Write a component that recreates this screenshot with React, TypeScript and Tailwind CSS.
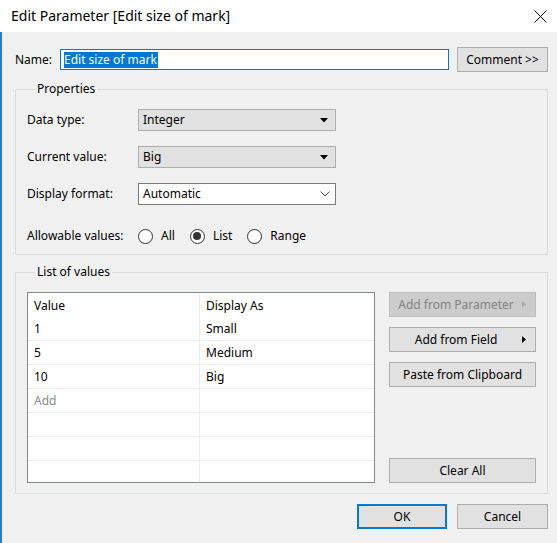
const FONT = "font-['Noto_Sans','Liberation_Sans',sans-serif]";

function DropArrow() {
  return (
    <svg width="8" height="5" viewBox="0 0 8 5" className="shrink-0">
      <path d="M0 0H8L4 4.5Z" fill="#000" />
    </svg>
  );
}

function Chevron() {
  return (
    <svg width="10" height="6" viewBox="0 0 10 6" className="shrink-0">
      <path d="M0.5 0.5L5 5L9.5 0.5" fill="none" stroke="#555" strokeWidth="1" />
    </svg>
  );
}

function Radio({ label, checked }: { label: string; checked?: boolean }) {
  return (
    <div className="flex items-center gap-[8px]">
      <span className="flex h-[15px] w-[15px] items-center justify-center rounded-full border border-[#333] bg-white">
        {checked && <span className="h-[8px] w-[8px] rounded-full bg-[#333]" />}
      </span>
      <span>{label}</span>
    </div>
  );
}

function SideButton({ label, arrow, disabled }: { label: string; arrow?: boolean; disabled?: boolean }) {
  return (
    <div
      className={`flex h-[25px] w-[147px] items-center border ${
        disabled ? "border-[#bfbfbf] bg-[#cccccc] text-[#838383]" : "border-[#adadad] bg-[#e1e1e1] text-black"
      }`}>
      <span className="flex-1 text-center">{label}</span>
      {arrow && (
        <span className="flex w-[13px] items-center">
          <svg width="4" height="7" viewBox="0 0 4 7">
            <path d="M0 0L4 3.5L0 7Z" fill={disabled ? "#ababab" : "#000"} />
          </svg>
        </span>
      )}
    </div>
  );
}

const ROWS = [
  { v: "1", d: "Small" },
  { v: "5", d: "Medium" },
  { v: "10", d: "Big" },
  { v: "Add", d: "", muted: true },
  { v: "", d: "" },
  { v: "", d: "" },
  { v: "", d: "" },
];

export default function App() {
  return (
    <div className={`flex h-[543px] w-[557px] flex-col bg-[#f0f0f0] text-[12px] leading-[16px] text-black ${FONT}`}>
      {/* Title bar */}
      <div className="flex h-[32px] shrink-0 items-center justify-between bg-white pl-[11px] pr-[10px]">
        <span className="text-[14px] leading-[20px]">Edit Parameter [Edit size of mark]</span>
        <svg width="13" height="13" viewBox="0 0 13 13">
          <path d="M0.5 0.5L12.5 12.5M12.5 0.5L0.5 12.5" stroke="#000" strokeWidth="1" />
        </svg>
      </div>

      {/* Body */}
      <div className="flex flex-1 flex-col border-l-2 border-[#2b79d0] pl-[13px] pr-[9px] pt-[15px]">
        {/* Name row */}
        <div className="flex h-[25px] items-center">
          <span className="w-[45px]">Name:</span>
          <div className="flex h-[21px] w-[389px] items-center border border-[#0078d7] bg-white pl-[3px]">
            <span className="bg-[#0078d7] pr-[1px] text-white">Edit size of mark</span>
          </div>
          <div className="ml-[8px] flex h-[25px] w-[91px] items-center justify-center border border-[#adadad] bg-[#e1e1e1]">
            Comment &gt;&gt;
          </div>
        </div>

        {/* Properties */}
        <fieldset className="mt-[9px] w-[533px] border border-[#dcdcdc] pb-[7px] pl-[11px] pt-[12px]">
          <legend className="ml-[8px] px-[2px]">Properties</legend>

          <div className="flex h-[22px] items-center">
            <span className="w-[111px]">Data type:</span>
            <div className="flex h-[22px] w-[198px] items-center justify-between border border-[#adadad] bg-[#e1e1e1] pl-[4px] pr-[7px]">
              <span>Integer</span>
              <DropArrow />
            </div>
          </div>

          <div className="mt-[15px] flex h-[22px] items-center">
            <span className="w-[111px]">Current value:</span>
            <div className="flex h-[22px] w-[198px] items-center justify-between border border-[#adadad] bg-[#e1e1e1] pl-[4px] pr-[7px]">
              <span>Big</span>
              <DropArrow />
            </div>
          </div>

          <div className="mt-[15px] flex h-[22px] items-center">
            <span className="w-[111px]">Display format:</span>
            <div className="flex h-[22px] w-[198px] items-center justify-between border border-[#7a7a7a] bg-white pl-[4px] pr-[5px]">
              <span>Automatic</span>
              <Chevron />
            </div>
          </div>

          <div className="mt-[20px] flex h-[22px] items-center">
            <span className="w-[111px]">Allowable values:</span>
            <div className="flex items-center gap-[15px]">
              <Radio label="All" />
              <Radio label="List" checked />
              <Radio label="Range" />
            </div>
          </div>
        </fieldset>

        {/* List of values */}
        <fieldset className="mt-[9px] w-[533px] border border-[#dcdcdc] pb-[10px] pl-[11px] pr-[11px] pt-[12px]">
          <legend className="ml-[8px] px-[2px]">List of values</legend>

          <div className="flex gap-[14px]">
            <div className="h-[191px] w-[348px] overflow-hidden border border-[#828790] bg-white">
              <div className="flex h-[24px]">
                <div className="w-[172px] border-r border-[#ececec] pl-[6px] pt-[5px]">Value</div>
                <div className="flex-1 pl-[6px] pt-[5px]">Display As</div>
              </div>
              {ROWS.map((r, i) => (
                <div key={i} className="flex h-[24px] border-b border-[#ececec]">
                  <div className={`w-[172px] border-r border-[#ececec] pl-[6px] leading-[24px] ${r.muted ? "text-[#8a8a8a]" : ""}`}>
                    {r.v}
                  </div>
                  <div className="flex-1 pl-[6px] leading-[24px]">{r.d}</div>
                </div>
              ))}
            </div>

            <div className="flex h-[191px] flex-col">
              <SideButton label="Add from Parameter" arrow disabled />
              <div className="mt-[10px]">
                <SideButton label="Add from Field" arrow />
              </div>
              <div className="mt-[10px]">
                <SideButton label="Paste from Clipboard" />
              </div>
              <div className="mt-auto">
                <SideButton label="Clear All" />
              </div>
            </div>
          </div>
        </fieldset>

        {/* Footer */}
        <div className="mt-[10px] flex w-[533px] justify-end gap-[10px]">
          <div className="flex h-[25px] w-[90px] items-center justify-center border-2 border-[#0078d7] bg-[#e1e1e1]">
            OK
          </div>
          <div className="flex h-[25px] w-[91px] items-center justify-center border border-[#adadad] bg-[#e1e1e1]">
            Cancel
          </div>
        </div>
      </div>
    </div>
  );
}
